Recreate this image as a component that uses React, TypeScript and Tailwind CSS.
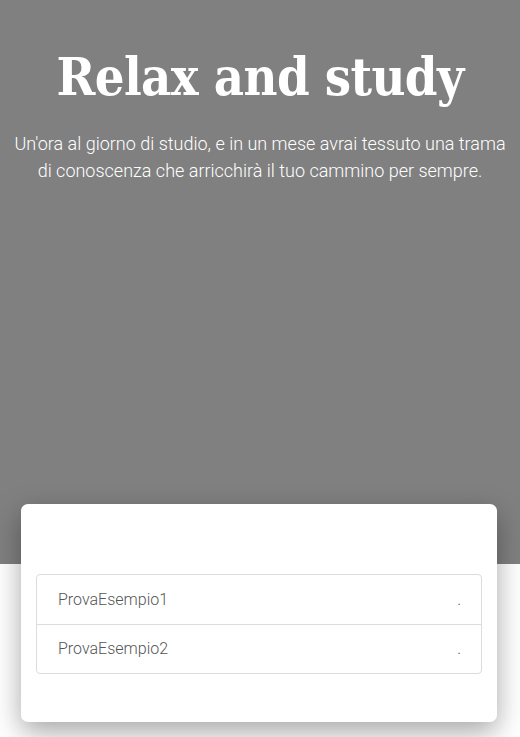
import React from 'react';

const ITEMS = ['ProvaEsempio1', 'ProvaEsempio2'];

export default function App() {
  return (
    <div className="min-h-[737px] bg-white font-['Roboto',sans-serif]">
      {/* Hero */}
      <section className="bg-[#808080] h-[564px] px-2 pt-[44px] text-center">
        <h1 className="font-['DejaVu_Serif',serif] font-bold text-white text-[52px] leading-[66px] tracking-[-0.6px] [font-stretch:condensed]">
          Relax and study
        </h1>
        <p className="mt-[20px] text-[18px] leading-[27px] font-light text-white">
          Un'ora al giorno di studio, e in un mese avrai tessuto una trama
          <br />
          di conoscenza che arricchirà il tuo cammino per sempre.
        </p>
      </section>

      {/* Card */}
      <div className="relative -mt-[60px] ml-[21px] w-[476px] bg-white rounded-[7px] shadow-[0_10px_28px_rgba(0,0,0,0.35)] px-[15px] pt-[70px] pb-[48px]">
        <ul className="border border-[#dcdcdc] rounded-[4px]">
          {ITEMS.map((item, i) => (
            <li
              key={item}
              className={`flex items-center justify-between h-[49px] pl-[21px] pr-[20px] text-[16px] font-light text-[#555] ${
                i > 0 ? 'border-t border-[#dcdcdc]' : ''
              }`}
            >
              <span>{item}</span>
              <span>.</span>
            </li>
          ))}
        </ul>
      </div>
    </div>
  );
}
